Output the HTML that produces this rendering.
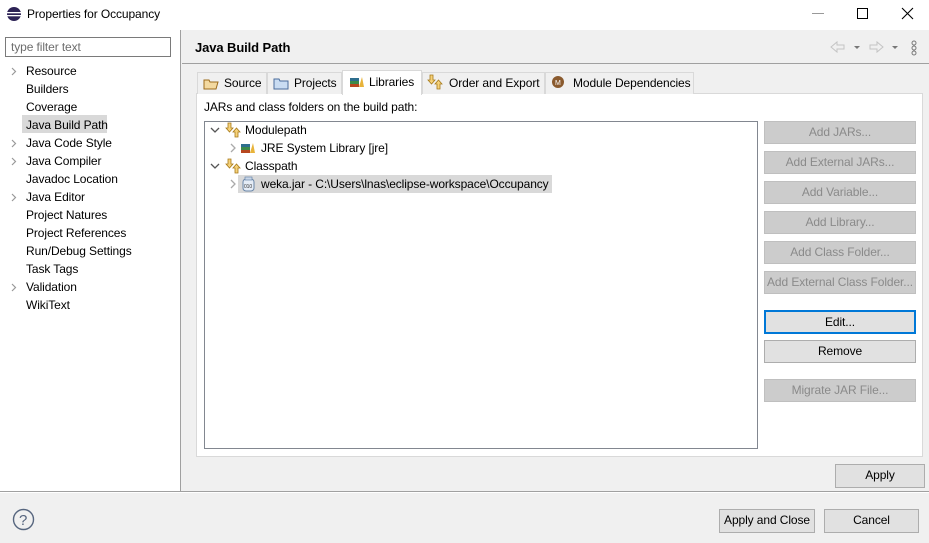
<!DOCTYPE html>
<html><head><style>
*{box-sizing:border-box;margin:0;padding:0}
body{width:929px;height:543px;position:relative;background:#f0f0f0;font-family:"Liberation Sans",sans-serif;font-size:12px;color:#000;overflow:hidden;letter-spacing:-0.1px}
.a{position:absolute;white-space:nowrap}
.btn{position:absolute;background:#e1e1e1;border:1px solid #adadad;text-align:center;line-height:20px;font-size:12px}
.dis{background:#cccccc;border-color:#bfbfbf;color:#8a8a8a}
.li{position:absolute;left:26px;font-size:12px}
.tab{position:absolute;top:72px;height:22px;background:#f0f0f0;border:1px solid #d9d9d9;border-bottom:none;line-height:20px;padding-left:26px}
</style></head><body>
<div class="a" style="left:0;top:0;width:929px;height:30px;background:#fff"></div>
<svg class="a" style="left:6px;top:6px" width="16" height="16"><circle cx="8" cy="8" r="7" fill="#2c2255"/><rect x="1" y="6" width="14" height="1.3" fill="#fff"/><rect x="1" y="9" width="14" height="1.3" fill="#fff"/></svg>
<div class="a" style="left:27px;top:7px">Properties for Occupancy</div>
<div class="a" style="left:812px;top:13px;width:12px;height:1px;background:#999"></div>
<div class="a" style="left:857px;top:8px;width:11px;height:11px;border:1px solid #000"></div>
<svg class="a" style="left:901px;top:7px" width="13" height="13"><path d="M1 1L12 12M12 1L1 12" stroke="#000" stroke-width="1.1"/></svg>

<div class="a" style="left:0;top:30px;width:181px;height:462px;background:#fff;border-right:1px solid #a0a0a0"></div>
<div class="a" style="left:5px;top:37px;width:166px;height:20px;border:1px solid #7a7a7a;background:#fff;color:#6d6d6d;padding:2px 5px">type filter text</div>
<div class="a" style="left:22px;top:115px;width:85px;height:18px;background:#d9d9d9"></div>
<svg class="a" style="left:11px;top:67px" width="6" height="9"><path d="M1 1l3.5 3.5L1 8" fill="none" stroke="#999" stroke-width="1.2"/></svg>
<svg class="a" style="left:11px;top:139px" width="6" height="9"><path d="M1 1l3.5 3.5L1 8" fill="none" stroke="#999" stroke-width="1.2"/></svg>
<svg class="a" style="left:11px;top:157px" width="6" height="9"><path d="M1 1l3.5 3.5L1 8" fill="none" stroke="#999" stroke-width="1.2"/></svg>
<svg class="a" style="left:11px;top:193px" width="6" height="9"><path d="M1 1l3.5 3.5L1 8" fill="none" stroke="#999" stroke-width="1.2"/></svg>
<svg class="a" style="left:11px;top:283px" width="6" height="9"><path d="M1 1l3.5 3.5L1 8" fill="none" stroke="#999" stroke-width="1.2"/></svg>
<div class="li" style="top:64px">Resource</div>
<div class="li" style="top:82px">Builders</div>
<div class="li" style="top:100px">Coverage</div>
<div class="li" style="top:118px">Java Build Path</div>
<div class="li" style="top:136px">Java Code Style</div>
<div class="li" style="top:154px">Java Compiler</div>
<div class="li" style="top:172px">Javadoc Location</div>
<div class="li" style="top:190px">Java Editor</div>
<div class="li" style="top:208px">Project Natures</div>
<div class="li" style="top:226px">Project References</div>
<div class="li" style="top:244px">Run/Debug Settings</div>
<div class="li" style="top:262px">Task Tags</div>
<div class="li" style="top:280px">Validation</div>
<div class="li" style="top:298px">WikiText</div>

<div class="a" style="left:195px;top:40px;font-weight:bold;font-size:13px">Java Build Path</div>
<div class="a" style="left:182px;top:63px;width:747px;height:1px;background:#a0a0a0"></div>
<svg class="a" style="left:830px;top:40px" width="75" height="14"><path d="M1 7l6-5v3h7v4H7v3z" fill="none" stroke="#c4c4c4"/><path d="M24 6h6l-3 3z" fill="#777"/><path d="M53 7l-6-5v3h-7v4h7v3z" fill="none" stroke="#c4c4c4"/><path d="M62 6h6l-3 3z" fill="#777"/></svg>
<svg class="a" style="left:910px;top:40px" width="8" height="16"><circle cx="4" cy="3" r="2" fill="none" stroke="#777"/><circle cx="4" cy="8" r="2" fill="none" stroke="#777"/><circle cx="4" cy="13" r="2" fill="none" stroke="#777"/></svg>

<div class="a" style="left:196px;top:93px;width:727px;height:364px;background:#fff;border:1px solid #d9d9d9"></div>
<div class="tab" style="left:197px;width:70px">Source</div>
<div class="tab" style="left:267px;width:75px">Projects</div>
<div class="tab" style="left:342px;top:70px;height:25px;width:80px;background:#fff;line-height:22px">Libraries</div>
<div class="tab" style="left:422px;width:123px">Order and Export</div>
<div class="tab" style="left:545px;width:149px;padding-left:27px">Module Dependencies</div>
<svg class="a" style="left:203px;top:76px" width="16" height="14"><path d="M1 4h5l1 2h8l-2 7H1z" fill="#f3d9a0" stroke="#9c6b1c"/></svg>
<svg class="a" style="left:273px;top:76px" width="16" height="14"><path d="M1 3h5l1 2h8v8H1z" fill="#c9dcf2" stroke="#4a6d9c"/></svg>
<svg class="a" style="left:349px;top:75px" width="16" height="14"><rect x="1" y="3" width="9" height="3" fill="#2e6e8e"/><rect x="1" y="6" width="9" height="3" fill="#3c8a4a"/><rect x="1" y="9" width="9" height="3" fill="#b7471f"/><path d="M10 12L13 2L15 12" fill="#e8b33a"/></svg>
<svg class="a" style="left:427px;top:74px" width="16" height="16"><path d="M3 1v5H1l3.5 4L8 6H6V1z" fill="#f6d27a" stroke="#a77a1a" stroke-width=".8"/><path d="M10 15v-5H8l3.5-4L15 10h-2v5z" fill="#f6d27a" stroke="#a77a1a" stroke-width=".8"/></svg>
<svg class="a" style="left:551px;top:75px" width="14" height="14"><circle cx="7" cy="7" r="6" fill="#8a5a2e"/><text x="4" y="10" font-size="7" fill="#fff" font-family="Liberation Sans">M</text></svg>

<div class="a" style="left:204px;top:100px">JARs and class folders on the build path:</div>
<div class="a" style="left:204px;top:121px;width:554px;height:328px;background:#fff;border:1px solid #828790"></div>
<div class="a" style="left:238px;top:175px;width:314px;height:18px;background:#d9d9d9"></div>
<svg class="a" style="left:210px;top:126px" width="10" height="8"><path d="M1 2l4 4 4-4" fill="none" stroke="#555" stroke-width="1.3"/></svg>
<svg class="a" style="left:210px;top:162px" width="10" height="8"><path d="M1 2l4 4 4-4" fill="none" stroke="#555" stroke-width="1.3"/></svg>
<svg class="a" style="left:229px;top:143px" width="8" height="10"><path d="M2 1l4 4-4 4" fill="none" stroke="#aaa" stroke-width="1.3"/></svg>
<svg class="a" style="left:229px;top:179px" width="8" height="10"><path d="M2 1l4 4-4 4" fill="none" stroke="#aaa" stroke-width="1.3"/></svg>
<svg class="a" style="left:225px;top:122px" width="16" height="16"><path d="M3 1v5H1l3.5 4L8 6H6V1z" fill="#f6d27a" stroke="#a77a1a" stroke-width=".8"/><path d="M10 15v-5H8l3.5-4L15 10h-2v5z" fill="#f6d27a" stroke="#a77a1a" stroke-width=".8"/></svg>
<svg class="a" style="left:225px;top:158px" width="16" height="16"><path d="M3 1v5H1l3.5 4L8 6H6V1z" fill="#f6d27a" stroke="#a77a1a" stroke-width=".8"/><path d="M10 15v-5H8l3.5-4L15 10h-2v5z" fill="#f6d27a" stroke="#a77a1a" stroke-width=".8"/></svg>
<div class="a" style="left:245px;top:123px">Modulepath</div>
<svg class="a" style="left:240px;top:141px" width="16" height="14"><rect x="1" y="3" width="9" height="3" fill="#2e6e8e"/><rect x="1" y="6" width="9" height="3" fill="#3c8a4a"/><rect x="1" y="9" width="9" height="3" fill="#b7471f"/><path d="M10 12L13 2L15 12" fill="#e8b33a"/></svg>
<div class="a" style="left:261px;top:141px">JRE System Library [jre]</div>
<div class="a" style="left:245px;top:159px">Classpath</div>
<svg class="a" style="left:241px;top:176px" width="15" height="16"><rect x="2" y="3" width="11" height="12" rx="3" fill="#e4ecf6" stroke="#6a86a8"/><rect x="4" y="1" width="7" height="3" fill="#c8d6e8" stroke="#6a86a8" stroke-width=".7"/><text x="3" y="12" font-size="5" fill="#333" font-family="Liberation Sans">010</text></svg>
<div class="a" style="left:261px;top:177px">weka.jar - C:\Users\lnas\eclipse-workspace\Occupancy</div>

<div class="btn dis" style="left:764px;top:121px;width:152px;height:23px">Add JARs...</div>
<div class="btn dis" style="left:764px;top:151px;width:152px;height:23px">Add External JARs...</div>
<div class="btn dis" style="left:764px;top:181px;width:152px;height:23px">Add Variable...</div>
<div class="btn dis" style="left:764px;top:211px;width:152px;height:23px">Add Library...</div>
<div class="btn dis" style="left:764px;top:241px;width:152px;height:23px">Add Class Folder...</div>
<div class="btn dis" style="left:764px;top:271px;width:152px;height:23px">Add External Class Folder...</div>
<div class="btn" style="left:764px;top:310px;width:152px;height:24px;border:2px solid #0078d7;line-height:20px">Edit...</div>
<div class="btn" style="left:764px;top:340px;width:152px;height:23px">Remove</div>
<div class="btn dis" style="left:764px;top:379px;width:152px;height:23px">Migrate JAR File...</div>

<div class="btn" style="left:835px;top:464px;width:90px;height:24px">Apply</div>
<div class="a" style="left:0;top:491px;width:929px;height:2px;background:#a0a0a0;border-bottom:1px solid #fff"></div>
<svg class="a" style="left:12px;top:508px" width="23" height="23"><circle cx="11.5" cy="11.5" r="10" fill="none" stroke="#56657e" stroke-width="1.4"/><text x="7" y="17" font-size="15" fill="#56657e" font-family="Liberation Sans">?</text></svg>
<div class="btn" style="left:719px;top:509px;width:96px;height:24px">Apply and Close</div>
<div class="btn" style="left:824px;top:509px;width:95px;height:24px">Cancel</div>
</body></html>
